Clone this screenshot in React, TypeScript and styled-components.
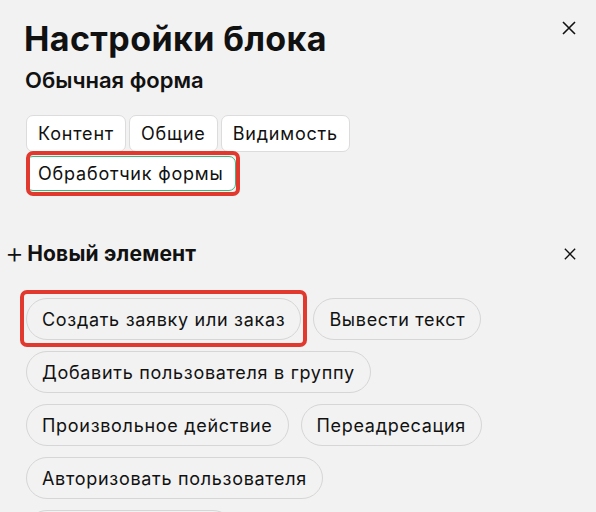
import React from "react";
import styled, { createGlobalStyle } from "styled-components";

const Global = createGlobalStyle`
  html, body { margin: 0; padding: 0; background: #f2f2f2; }
  body { font-family: Inter, "Noto Sans", sans-serif; color: #111; }
  * { box-sizing: border-box; }
`;

const Panel = styled.div`
  width: 596px;
  height: 512px;
  overflow: hidden;
  background: #f2f2f2;
  padding: 19px 0 0 0;
`;

const Header = styled.div`
  display: flex;
  justify-content: space-between;
  align-items: flex-start;
  padding: 0 18px 0 24px;
`;

const Title = styled.h1`
  margin: 0;
  font-size: 34px;
  line-height: 40px;
  font-weight: 700;
  letter-spacing: 0.4px;
`;

const CloseButton = styled.button<{ $size: number }>`
  border: 0;
  background: none;
  padding: 0;
  width: ${(p) => p.$size + 4}px;
  height: ${(p) => p.$size + 4}px;
  display: flex;
  align-items: center;
  justify-content: center;
  color: #111;
  cursor: pointer;
`;

const Subtitle = styled.div`
  margin: 8px 0 0 25px;
  font-size: 22px;
  line-height: 26px;
  font-weight: 600;
  letter-spacing: 0;
`;

const Tabs = styled.div`
  display: flex;
  flex-wrap: wrap;
  gap: 4px 3px;
  width: 340px;
  margin: 22px 0 0 26px;
`;

const Tab = styled.button<{ $active?: boolean }>`
  height: ${(p) => (p.$active ? 35 : 37)}px;
  padding: 0 11px;
  background: #fff;
  border: 1px solid ${(p) => (p.$active ? "#3cb878" : "#dcdcdc")};
  border-radius: 7px;
  font-family: inherit;
  font-size: 18px;
  letter-spacing: 0.8px;
  color: #111;
  cursor: pointer;
`;

const Highlight = styled.span<{ $t: number; $r: number; $b: number; $l: number }>`
  position: relative;
  display: inline-flex;
  &::after {
    content: "";
    position: absolute;
    top: ${(p) => p.$t}px;
    right: ${(p) => p.$r}px;
    bottom: ${(p) => p.$b}px;
    left: ${(p) => p.$l}px;
    border: 4px solid #e2392f;
    border-radius: 7px;
    pointer-events: none;
  }
`;

const SectionHeader = styled.div`
  display: flex;
  align-items: center;
  justify-content: space-between;
  margin-top: 49px;
  padding: 0 18px 0 5px;
`;

const SectionTitle = styled.div`
  display: flex;
  align-items: center;
  gap: 3px;
  font-size: 21px;
  font-weight: 700;
  line-height: 28px;
  letter-spacing: 0.2px;
`;

const Plus = styled.span`
  font-size: 29px;
  font-weight: 300;
  line-height: 28px;
  margin-top: -2px;
`;

const Pills = styled.div`
  display: flex;
  flex-wrap: wrap;
  gap: 11px 12px;
  width: 500px;
  margin: 30px 0 0 26px;
`;

const Pill = styled.button`
  height: 42px;
  padding: 0 15px;
  background: #f2f2f2;
  border: 1px solid #d6d6d6;
  border-radius: 21px;
  font-family: inherit;
  font-size: 18px;
  letter-spacing: 0.7px;
  color: #111;
  cursor: pointer;
`;

const XIcon = ({ size }: { size: number }) => (
  <svg width={size} height={size} viewBox="0 0 14 14" fill="none">
    <path d="M1 1L13 13M13 1L1 13" stroke="#111" strokeWidth="1.6" />
  </svg>
);

const actions = [
  "Вывести текст",
  "Добавить пользователя в группу",
  "Произвольное действие",
  "Переадресация",
  "Авторизовать пользователя",
  "Отправить письмо",
];

export default function App() {
  return (
    <>
      <Global />
      <Panel>
        <Header>
          <Title>Настройки блока</Title>
          <CloseButton $size={14}>
            <XIcon size={14} />
          </CloseButton>
        </Header>
        <Subtitle>Обычная форма</Subtitle>
        <Tabs>
          <Tab>Контент</Tab>
          <Tab>Общие</Tab>
          <Tab>Видимость</Tab>
          <Highlight $t={-5} $r={-4} $b={-5} $l={0}>
            <Tab $active>Обработчик формы</Tab>
          </Highlight>
        </Tabs>
        <SectionHeader>
          <SectionTitle>
            <Plus>+</Plus>
            Новый элемент
          </SectionTitle>
          <CloseButton $size={12}>
            <XIcon size={12} />
          </CloseButton>
        </SectionHeader>
        <Pills>
          <Highlight $t={-8} $r={-6} $b={-7} $l={-6}>
            <Pill>Создать заявку или заказ</Pill>
          </Highlight>
          {actions.map((a) => (
            <Pill key={a}>{a}</Pill>
          ))}
        </Pills>
      </Panel>
    </>
  );
}
